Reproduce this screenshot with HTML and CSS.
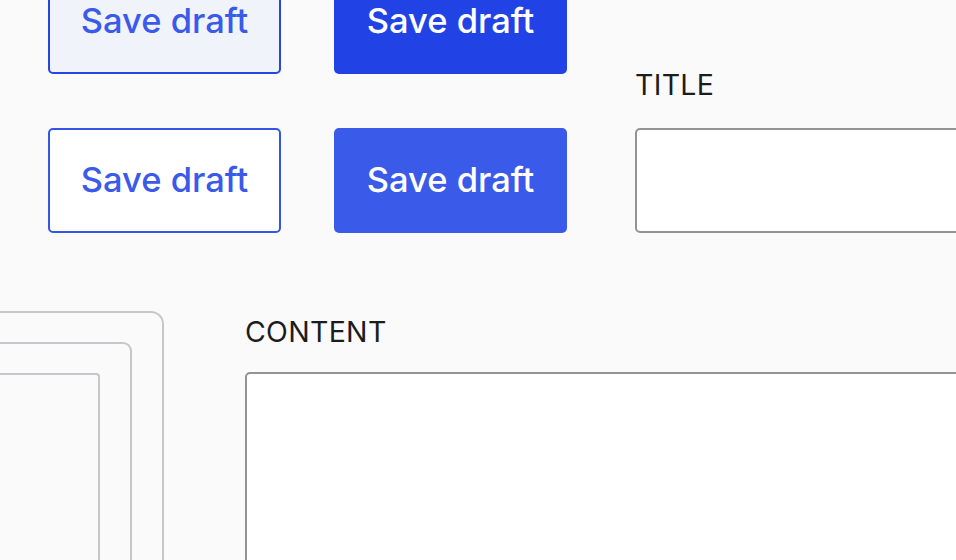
FILE: index.html
```html
<!DOCTYPE html>
<html lang="en">
<head>
  <meta charset="UTF-8">
  <title>Editor</title>
  <link rel="stylesheet" href="styles.css">
</head>
<body>
  <div id="page">
    <div class="top">
      <div class="buttons">
        <button class="btn btn-outline is-hover">Save draft</button>
        <button class="btn btn-primary is-hover">Save draft</button>
        <button class="btn btn-outline">Save draft</button>
        <button class="btn btn-primary">Save draft</button>
      </div>
      <div class="field field-title">
        <label for="title">TITLE</label>
        <input type="text" id="title">
      </div>
    </div>

    <div class="bottom">
      <div class="frame frame-outer">
        <div class="frame frame-middle">
          <div class="frame frame-inner"></div>
        </div>
      </div>
      <div class="field field-content">
        <label for="content">CONTENT</label>
        <textarea id="content"></textarea>
      </div>
    </div>
  </div>
</body>
</html>
```

FILE: styles.css
```css
html,
body {
    height: 560px;
    overflow: hidden;
}

body {
    margin: 0;
    background-color: #fafafa;
    font-family: 'Inter', 'Noto Sans', sans-serif;
}

#page {
    margin-top: -31px;
}

.top {
    display: flex;
    padding-left: 48px;
    gap: 69px;
}

.buttons {
    display: grid;
    grid-template-columns: 233px 233px;
    grid-auto-rows: 105px;
    column-gap: 53px;
    row-gap: 54px;
    flex-shrink: 0;
}

.btn {
    font-family: inherit;
    font-size: 34.5px;
    font-weight: 500;
    border-radius: 5px;
    cursor: pointer;
    padding: 0 0 3px;
}

.btn-outline {
    background-color: #fff;
    color: #3a5ae9;
    border: 2px solid #3455e8;
}

.btn-outline.is-hover {
    background-color: #f1f3fb;
    border-color: #2446e6;
}

.btn-primary {
    background-color: #3a5ae9;
    color: #fff;
    border: none;
}

.btn-primary.is-hover {
    background-color: #2143e6;
}

.field label {
    display: block;
    font-size: 28.5px;
    letter-spacing: 0.3px;
    color: #1c1c1c;
    line-height: 1;
}

.field input,
.field textarea {
    display: block;
    box-sizing: border-box;
    background-color: #fff;
    border: 2px solid #939393;
    border-radius: 5px;
    font-family: inherit;
    font-size: 28px;
    margin: 0;
    padding: 10px;
}

.field-title {
    align-self: flex-end;
    margin-left: -1px;
}

.field-title label {
    margin-bottom: 29px;
}

.field-title input {
    width: 420px;
    height: 105px;
}

.bottom {
    display: flex;
    margin-top: 78px;
    gap: 81px;
}

.frame {
    box-sizing: border-box;
    border: 2px solid #c7c7cb;
    border-bottom: none;
}

.frame-outer {
    flex-shrink: 0;
    width: 264px;
    margin-left: -100px;
    height: 400px;
    border-radius: 13px 13px 0 0;
    padding: 29px 30px 0 0;
}

.frame-middle {
    height: 100%;
    border-radius: 9px 9px 0 0;
    padding: 29px 30px 0 0;
}

.frame-inner {
    height: 100%;
    border-radius: 4px 4px 0 0;
}

.field-content {
    flex-shrink: 0;
    padding-top: 7px;
}

.field-content label {
    margin-bottom: 25px;
}

.field-content textarea {
    width: 800px;
    height: 300px;
    resize: none;
}
```
